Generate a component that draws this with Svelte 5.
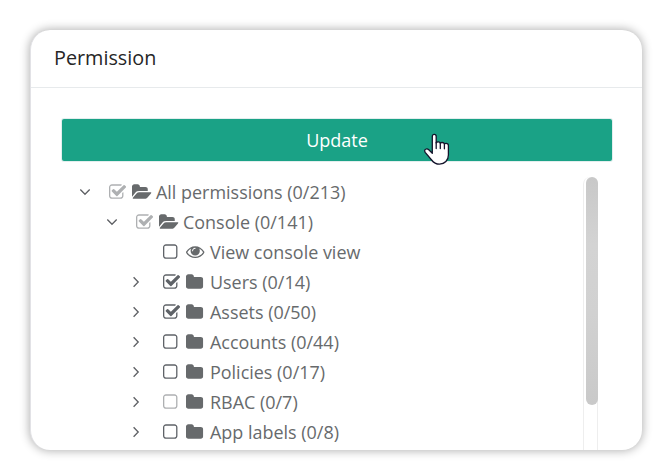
<script>
  const rows = [
    { depth: 0, arrow: 'down', check: 'on', muted: true, icon: 'open', label: 'All permissions (0/213)' },
    { depth: 1, arrow: 'down', check: 'on', muted: true, icon: 'open', label: 'Console (0/141)' },
    { depth: 2, arrow: '', check: 'off', icon: 'eye', label: 'View console view' },
    { depth: 2, arrow: 'right', check: 'on', icon: 'folder', label: 'Users (0/14)' },
    { depth: 2, arrow: 'right', check: 'on', icon: 'folder', label: 'Assets (0/50)' },
    { depth: 2, arrow: 'right', check: 'off', icon: 'folder', label: 'Accounts (0/44)' },
    { depth: 2, arrow: 'right', check: 'off', icon: 'folder', label: 'Policies (0/17)' },
    { depth: 2, arrow: 'right', check: 'off', muted: true, icon: 'folder', label: 'RBAC (0/7)' },
    { depth: 2, arrow: 'right', check: 'off', icon: 'folder', label: 'App labels (0/8)' }
  ];
  const checks = {
    on: { box: '64 0 1792 1792', d: 'M1472 930v318q0 119-84.5 203.5t-203.5 84.5h-832q-119 0-203.5-84.5t-84.5-203.5v-832q0-119 84.5-203.5t203.5-84.5h832q63 0 117 25 15 7 18 23 3 17-9 29l-49 49q-10 10-23 10-3 0-9-2-23-6-45-6h-832q-66 0-113 47t-47 113v832q0 66 47 113t113 47h832q66 0 113-47t47-113v-254q0-13 9-22l64-64q10-10 23-10 6 0 12 3 20 8 20 29zm231-489l-814 814q-24 24-57 24t-57-24l-430-430q-24-24-24-57t24-57l110-110q24-24 57-24t57 24l263 263 647-647q24-24 57-24t57 24l110 110q24 24 24 57t-24 57z' },
    off: { box: '192 0 1792 1792', d: 'M1312 256h-832q-66 0-113 47t-47 113v832q0 66 47 113t113 47h832q66 0 113-47t47-113v-832q0-66-47-113t-113-47zm288 160v832q0 119-84.5 203.5t-203.5 84.5h-832q-119 0-203.5-84.5t-84.5-203.5v-832q0-119 84.5-203.5t203.5-84.5h832q119 0 203.5 84.5t84.5 203.5z' }
  };
  const icons = {
    folder: { box: '64 0 1792 1792', d: 'M1728 608v704q0 92-66 158t-158 66h-1216q-92 0-158-66t-66-158v-960q0-92 66-158t158-66h320q92 0 158 66t66 158v32h672q92 0 158 66t66 158z' },
    open: { box: '0 0 1792 1792', d: 'M1879 952q0 31-31 66l-336 396q-43 51-120.5 86.5t-143.5 35.5h-1088q-34 0-60.5-13t-26.5-43q0-31 31-66l336-396q43-51 120.5-86.5t143.5-35.5h1088q34 0 60.5 13t26.5 43zm-343-344v160h-832q-94 0-197 47.5t-164 119.5l-337 396-5 6q0-4-.5-12.5t-.5-12.5v-960q0-92 66-158t158-66h320q92 0 158 66t66 158v32h544q92 0 158 66t66 158z' },
    eye: { box: '0 64 1792 1792', d: 'M1664 960q-152-236-381-353 61 104 61 225 0 185-131.5 316.5t-316.5 131.5-316.5-131.5-131.5-316.5q0-121 61-225-229 117-381 353 133 205 333.5 326.5t434.5 121.5 434.5-121.5 333.5-326.5zm-720-384q0-20-14-34t-34-14q-125 0-214.5 89.5t-89.5 214.5q0 20 14 34t34 14 34-14 14-34q0-86 61-147t147-61q20 0 34-14t14-34zm848 384q0 34-20 69-140 230-376.5 368.5t-499.5 138.5-499.5-139-376.5-368q-20-35-20-69t20-69q140-229 376.5-368t499.5-139 499.5 139 376.5 368q20 35 20 69z' }
  };
</script>

<main class="page">
  <section class="card">
    <header>Permission</header>
    <div class="body">
      <button class="update">Update
        <svg class="cursor" viewBox="0 0 26 33" width="26" height="33">
          <path d="M8.3 20.2V3.5c0-1.3.8-2.1 1.9-2.1s2 .8 2 2.1v6.400c.3-.7 1-1 2-1 1.200 0 2 .5 2.100 1.300.4-.5 1-.7 1.900-.7 1.200 0 2 .5 2.200 1.400.4-.4 1-.5 1.800-.5 1.300 0 2.200.9 2.200 2.200v9.300c0 5.200-3.700 9.300-8.900 9.300-3.400 0-5.900-1.500-7.900-4.200L1.200 19.300c-.8-1.100-.7-2.400.4-3 1-.6 2.200-.4 3.200.5z" />
          <path class="knuckles" d="M12.200 9.500v6M16.300 10v5.500M20.400 10.800v5" />
        </svg>
      </button>
      <div class="scroll">
        <ul>
          {#each rows as row}
            <li style="padding-left: {row.depth * 27}px">
              <span class="arrow">
                {#if row.arrow === 'down'}
                  <svg width="14" height="14" viewBox="0 0 14 14"><path d="M2.300 4.500L7 9.200l4.700-4.700" /></svg>
                {:else if row.arrow === 'right'}
                  <svg class="right" width="14" height="14" viewBox="0 0 14 14"><path d="M4.600 2.300L9.200 7l-4.600 4.700" /></svg>
                {/if}
              </span>
              <span class="check" class:muted={row.muted}>
                <svg viewBox={checks[row.check].box}><path d={checks[row.check].d} /></svg>
              </span>
              <span class="icon">
                <svg viewBox={icons[row.icon].box}><path d={icons[row.icon].d} /></svg>
              </span>
              <span class="label">{row.label}</span>
            </li>
          {/each}
        </ul>
        <div class="track"><div class="thumb"></div></div>
      </div>
    </div>
  </section>
</main>

<style>
  :global(body) { background: #fff; overflow: hidden; }
  .page {
    box-sizing: border-box;
    width: 672px;
    height: 470px;
    padding: 30px;
    font-family: "Open Sans", "Noto Sans", sans-serif;
  }
  .card {
    display: flex;
    flex-direction: column;
    box-sizing: border-box;
    width: 612px;
    height: 420px;
    border-left: 1px solid #e2e2e6;
    border-radius: 20px;
    background: #fff;
    box-shadow: 0 0 10px 1px rgba(0, 0, 0, 0.3);
    overflow: hidden;
  }
  header {
    box-sizing: border-box;
    flex: none;
    height: 58px;
    padding-left: 23px;
    border-bottom: 1px solid #e7eaec;
    font-size: 19.8px;
    line-height: 56px;
    color: #262626;
  }
  .body {
    flex: 1;
    min-height: 0;
    display: flex;
    flex-direction: column;
    gap: 16px;
    padding: 31px 30px 0 31px;
  }
  .update {
    position: relative;
    flex: none;
    height: 42px;
    padding: 0;
    border: 0;
    border-radius: 2px;
    box-shadow: 0 0 0 1px #e3eeee;
    background: #1aa286;
    color: #fff;
    font: 18px/42px "Open Sans", "Noto Sans", sans-serif;
  }
  .cursor { position: absolute; left: 362px; top: 14px; }
  .cursor path { fill: #fff; stroke: #14142b; stroke-width: 1.3; stroke-linejoin: round; stroke-linecap: round; }
  .cursor .knuckles { fill: none; }
  .scroll { display: flex; flex: 1; min-height: 0; justify-content: space-between; }
  ul { margin: 0; padding: 0 0 0 16px; list-style: none; }
  li { display: flex; align-items: center; height: 30px; white-space: nowrap; }
  .arrow { flex: none; width: 31.400px; height: 14px; }
  .arrow svg { display: block; fill: none; stroke: #606266; stroke-width: 1.350; }
  .arrow .right { margin-left: -3px; }
  .check { flex: none; width: 22.700px; height: 19px; color: #5f6368; }
  .check.muted { color: #aeb0b2; }
  .icon { flex: none; width: 23.900px; height: 19px; color: #676a6c; }
  .check svg, .icon svg { display: block; width: 18.400px; height: 18.400px; fill: currentColor; overflow: visible; }
  .label { font-size: 17.970px; line-height: 30px; color: #676a6c; }
  .track {
    box-sizing: border-box;
    flex: none;
    width: 15px;
    margin-right: 14px;
    padding-left: 2px;
    border: 1px solid #eee;
    border-width: 0 1px;
    border-radius: 7px 7px 0 0;
  }
  .thumb {
    width: 12px;
    height: 228px;
    border-radius: 6px;
    background: linear-gradient(#c8c8c8, #d3d3d3 30%, #d1d1d1 60%, #c9c9c9);
  }
</style>
